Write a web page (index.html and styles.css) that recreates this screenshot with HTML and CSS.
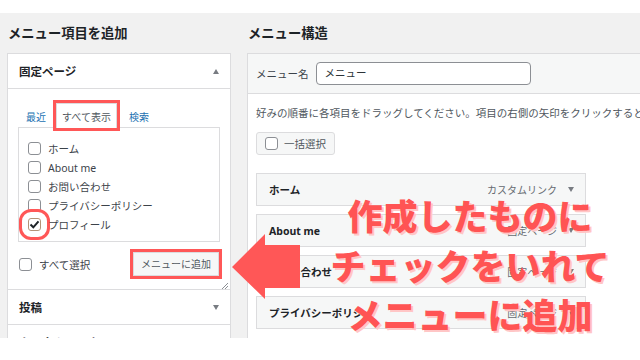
FILE: index.html
```
<!DOCTYPE html>
<html>
<head>
<title>メニュー</title>
<link rel="stylesheet" href="styles.css">
</head>
<body>

<div class="screen">

<div class="leftCol">
<h2>メニュー項目を追加</h2>
<div class="accordion">
<div class="accSection">
<div class="accTitle">固定ページ <span class="triUp"></span></div>
<div class="accBody">
<ul class="tabs">
<li>最近</li>
<li class="tabActive">すべて表示</li>
<li>検索</li>
</ul>
<div class="checklist">
<div class="checkRow"><span class="cb"></span>ホーム</div>
<div class="checkRow"><span class="cb"></span>About me</div>
<div class="checkRow"><span class="cb"></span>お問い合わせ</div>
<div class="checkRow"><span class="cb"></span>プライバシーポリシー</div>
<div class="checkRow"><span class="cb cbChecked"><svg width="11" height="11" viewBox="0 0 11 11"><path d="M1.5 5.5 L4.3 8.3 L9.5 2.3" fill="none" stroke="#1d2327" stroke-width="2"/></svg></span>プロフィール</div>
</div>
<div class="addRow">
<div class="checkRow"><span class="cb"></span>すべて選択</div>
<span class="addButton">メニューに追加</span>
</div>
<div class="resizeRow">
<svg width="6" height="6" viewBox="0 0 6 6"><path d="M0 6 L6 0 M3 6 L6 3" stroke="#8c8f94" stroke-width="1"/></svg>
</div>
</div>
</div>
<div class="accSection">
<div class="accTitle">投稿 <span class="triDown"></span></div>
</div>
<div class="accSection">
<div class="accTitle">カスタムリンク <span class="triDown"></span></div>
</div>
</div>
</div>

<div class="rightCol">
<h2>メニュー構造</h2>
<div class="menuPanel">
<div class="menuHeader">
<span class="menuLabel">メニュー名</span>
<span class="menuInput">メニュー</span>
</div>
<div class="menuBody">
<p class="menuHelp">好みの順番に各項目をドラッグしてください。項目の右側の矢印をクリックすると、設定を追加できます。</p>
<span class="bulkButton"><span class="cb"></span>一括選択</span>
<div class="menuItems">
<div class="menuItem"><b>ホーム</b><span class="itemType">カスタムリンク</span><span class="triDown"></span></div>
<div class="menuItem"><b>About me</b><span class="itemType">固定ページ</span><span class="triDown"></span></div>
<div class="menuItem"><b>お問い合わせ</b><span class="itemType">固定ページ</span><span class="triDown"></span></div>
<div class="menuItem"><b>プライバシーポリシー</b><span class="itemType">固定ページ</span><span class="triDown"></span></div>
</div>
</div>
</div>
</div>

</div>

<svg class="arrow" width="72" height="72" viewBox="0 0 72 72">
<polygon points="2,37 35,4 35,15 70,15 70,58 35,58 35,69" fill="#ff5757"/>
</svg>

<div class="note">
作成したものに<br>
チェックをいれて<br>
メニューに追加
</div>

</body>
</html>
```

FILE: styles.css
```
body {
    margin: 0;
    background: #fff;
    font-family: "Noto Sans", "Noto Sans CJK JP", sans-serif;
    color: #3c434a;
}
.screen {
    margin-top: 13px;
    height: 325px;
    background: #f1f1f1;
    display: flex;
    overflow: hidden;
}
h2 {
    margin: 0 0 10px;
    padding: 10px 0 0 1px;
    font: bold 13.3px/20px "Noto Sans CJK JP", sans-serif;
    color: #1d2327;
}

/* left column */
.leftCol {
    width: 247px;
    flex: none;
    padding-left: 7px;
    box-sizing: border-box;
}
.accordion {
    width: 224px;
    box-sizing: border-box;
    border: 1px solid #dcdcde;
    background: #fff;
}
.accSection + .accSection {
    border-top: 1px solid #dcdcde;
}
.accTitle {
    height: 34px;
    padding: 0 11px 0 11px;
    display: flex;
    align-items: center;
    justify-content: space-between;
    font: bold 11.5px "Noto Sans CJK JP", sans-serif;
    color: #1d2327;
}
.accBody {
    border-top: 1px solid #dcdcde;
    padding: 14px 10px 0;
}
.triUp, .triDown {
    width: 0;
    height: 0;
    border-left: 3.5px solid transparent;
    border-right: 3.5px solid transparent;
}
.triUp {
    border-bottom: 5px solid #787c82;
}
.triDown {
    border-top: 5px solid #787c82;
}
.tabs {
    list-style: none;
    margin: 0 0 -1px;
    padding: 0 0 0 2px;
    display: flex;
    position: relative;
}
.tabs li {
    padding: 3px 5px 0;
    margin-right: 4px;
    height: 21px;
    line-height: 20px;
    font-size: 10px;
    color: #2271b1;
    border: 1px solid transparent;
    border-bottom: none;
}
.tabs li.tabActive {
    color: #50575e;
    background: #fff;
    border-color: #dcdcde;
    margin-right: 6px;
    outline: 3px solid #ff5757;
}
.checklist {
    border: 1px solid #dcdcde;
    padding: 11px 9px 7px;
}
.checkRow {
    display: flex;
    align-items: center;
    height: 19px;
    font-size: 10.5px;
    color: #3c434a;
}
.cb {
    width: 13px;
    height: 13px;
    box-sizing: border-box;
    border: 1px solid #8c8f94;
    border-radius: 3px;
    background: #fff;
    margin-right: 7px;
    flex: none;
    display: flex;
    align-items: center;
    justify-content: center;
}
.cbChecked {
    border-color: #b39478;
    outline: 3px solid #ff5757;
    outline-offset: 6px;
}
.addRow {
    margin-top: 10px;
    height: 24px;
    display: flex;
    align-items: center;
    justify-content: space-between;
}
.addRow .checkRow {
    margin-left: 1px;
}
.addButton {
    height: 24px;
    box-sizing: border-box;
    padding: 0 7px;
    margin-right: 1px;
    border: 1px solid #dcdcde;
    background: #f6f7f7;
    font-size: 10px;
    line-height: 22px;
    color: #50575e;
    outline: 3px solid #ff5757;
}
.resizeRow {
    margin: 7px -8px 0 0;
    height: 6px;
    display: flex;
    justify-content: flex-end;
}
.resizeRow svg {
    display: block;
}

/* right column */
.rightCol {
    flex: 1;
    min-width: 0;
}
.menuPanel {
    border: 1px solid #dcdcde;
    border-right: none;
    background: #fff;
    height: 400px;
}
.menuHeader {
    height: 39px;
    padding: 0 8px;
    display: flex;
    align-items: center;
    background: #f6f7f7;
    border-bottom: 1px solid #dcdcde;
}
.menuLabel {
    font-size: 10.5px;
    margin-right: 7px;
}
.menuInput {
    width: 215px;
    height: 23px;
    box-sizing: border-box;
    padding: 0 8px;
    border: 1px solid #8c8f94;
    border-radius: 4px;
    background: #fff;
    font-size: 10.5px;
    line-height: 21px;
    color: #2c3338;
}
.menuBody {
    padding: 11px 8px 0;
}
.menuHelp {
    margin: 0;
    font-size: 10.5px;
    line-height: 16px;
    white-space: nowrap;
    color: #50575e;
}
.bulkButton {
    margin-top: 11px;
    height: 23px;
    box-sizing: border-box;
    padding: 0 8px;
    display: inline-flex;
    align-items: center;
    border: 1px solid #dcdcde;
    border-radius: 3px;
    background: #f6f7f7;
    font-size: 10.5px;
    color: #50575e;
}
.bulkButton .cb {
    margin-right: 6px;
}
.menuItems {
    margin-top: 18px;
}
.menuItem {
    width: 330px;
    height: 33px;
    box-sizing: border-box;
    padding: 0 11px 0 12px;
    margin-bottom: 8px;
    display: flex;
    align-items: center;
    border: 1px solid #dcdcde;
    background: #f6f7f7;
}
.menuItem b {
    font: bold 10.5px "Noto Sans", "Noto Sans CJK JP", sans-serif;
    color: #1d2327;
}
.itemType {
    margin-left: auto;
    margin-right: 11px;
    font-size: 10px;
    color: #646970;
}

/* annotation overlay */
.arrow {
    position: absolute;
    left: 230px;
    top: 230px;
}
.note {
    position: absolute;
    left: 310px;
    top: 190px;
    width: 320px;
    text-align: center;
    font: 900 35px/49.5px "Noto Sans CJK JP", sans-serif;
    color: #ff5454;
    text-shadow: 2px 2px 0 #ffc6c6;
}
```
